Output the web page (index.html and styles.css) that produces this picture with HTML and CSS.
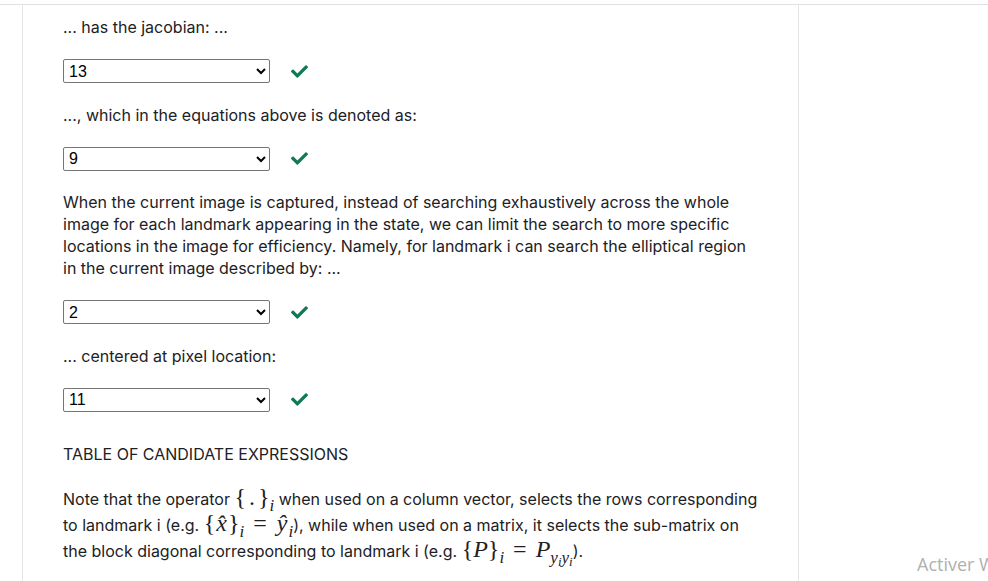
FILE: index.html
```html
<!DOCTYPE html>
<html>
<head>
<meta charset="utf-8">
<link rel="stylesheet" href="styles.css">
</head>
<body>
<div class="top"></div>
<div class="layout">
  <div class="gutter"></div>
  <main class="main">
    <p class="line">... has the jacobian: ...</p>
    <div class="answer">
      <select class="sel"><option>13</option></select>
      <svg class="check" viewBox="0 0 512 512"><path d="M173.898 439.404l-166.4-166.4c-9.997-9.997-9.997-26.206 0-36.204l36.203-36.204c9.997-9.998 26.207-9.998 36.204 0L192 312.69 432.095 72.596c9.997-9.997 26.207-9.997 36.204 0l36.203 36.204c9.997 9.997 9.997 26.206 0 36.204l-294.4 294.401c-9.998 9.997-26.207 9.997-36.204-.001z"/></svg>
    </div>
    <p class="line">..., which in the equations above is denoted as:</p>
    <div class="answer">
      <select class="sel"><option>9</option></select>
      <svg class="check" viewBox="0 0 512 512"><path d="M173.898 439.404l-166.4-166.4c-9.997-9.997-9.997-26.206 0-36.204l36.203-36.204c9.997-9.998 26.207-9.998 36.204 0L192 312.69 432.095 72.596c9.997-9.997 26.207-9.997 36.204 0l36.203 36.204c9.997 9.997 9.997 26.206 0 36.204l-294.4 294.401c-9.998 9.997-26.207 9.997-36.204-.001z"/></svg>
    </div>
    <p class="line">When the current image is captured, instead of searching exhaustively across the whole image for each landmark appearing in the state, we can limit the search to more specific locations in the image for efficiency. Namely, for landmark i can search the elliptical region in the current image described by: ...</p>
    <div class="answer">
      <select class="sel"><option>2</option></select>
      <svg class="check" viewBox="0 0 512 512"><path d="M173.898 439.404l-166.4-166.4c-9.997-9.997-9.997-26.206 0-36.204l36.203-36.204c9.997-9.998 26.207-9.998 36.204 0L192 312.69 432.095 72.596c9.997-9.997 26.207-9.997 36.204 0l36.203 36.204c9.997 9.997 9.997 26.206 0 36.204l-294.4 294.401c-9.998 9.997-26.207 9.997-36.204-.001z"/></svg>
    </div>
    <p class="line">... centered at pixel location:</p>
    <div class="answer">
      <select class="sel"><option>11</option></select>
      <svg class="check" viewBox="0 0 512 512"><path d="M173.898 439.404l-166.4-166.4c-9.997-9.997-9.997-26.206 0-36.204l36.203-36.204c9.997-9.998 26.207-9.998 36.204 0L192 312.69 432.095 72.596c9.997-9.997 26.207-9.997 36.204 0l36.203 36.204c9.997 9.997 9.997 26.206 0 36.204l-294.4 294.401c-9.998 9.997-26.207 9.997-36.204-.001z"/></svg>
    </div>
    <p class="line heading">TABLE OF CANDIDATE EXPRESSIONS</p>
    <p class="line note">Note that the operator <span class="m"><span class="br">{</span><span class="dot">.</span><span class="br">}</span><sub>i</sub></span> when used on a column vector, selects the rows corresponding to landmark i (e.g. <span class="m"><span class="br">{</span><span class="hat">x&#770;</span><span class="br">}</span><sub>i</sub><span class="eq">=</span><span class="hat">y&#770;</span><sub>i</sub></span>), while when used on a matrix, it selects the sub-matrix on the block diagonal corresponding to landmark i (e.g. <span class="m"><span class="br">{</span>P<span class="br">}</span><sub>i</sub><span class="eq">=</span>P<sub>y<sub>i</sub>y<sub>i</sub></sub></span>).</p>
  </main>
  <div class="side"></div>
</div>
<div class="watermark">Activer Windows</div>
</body>
</html>
```
FILE: styles.css
```css
html, body {
  margin: 0;
  padding: 0;
  background: #fff;
  overflow: hidden;
}
body {
  font-family: Inter, "Noto Sans", sans-serif;
  font-size: 16px;
  line-height: 22px;
  color: #1d2125;
  height: 581px;
  position: relative;
}
.top {
  height: 4px;
  border-bottom: 1px solid #dee2e6;
}
.layout {
  display: flex;
  height: 576px;
}
.gutter {
  width: 22px;
  border-right: 1px solid #e6e6e6;
}
.main {
  box-sizing: border-box;
  width: 776px;
  padding: 11px 35px 0 40px;
  border-right: 1px solid #e6e6e6;
}
.side {
  flex: 1;
}
.line {
  margin: 0 0 21px 0;
}
.answer {
  display: flex;
  align-items: center;
  gap: 21px;
  margin-bottom: 20.5px;
  height: 24px;
}
.sel {
  box-sizing: border-box;
  width: 207px;
  height: 24px;
  font-family: "Liberation Sans", Arial, sans-serif;
  font-size: 16px;
  color: #000;
  border: 1px solid #767676;
  border-radius: 2px;
  background: #fff;
  padding: 0 0 0 1px;
  margin: 0;
}
.check {
  width: 17px;
  height: 17px;
  fill: #0f7a55;
}
.heading {
  margin-top: 31px;
}
.note {
  line-height: 26px;
  margin-top: 0;
}
.m {
  font-family: "Liberation Serif", "DejaVu Serif", serif;
  font-size: 24px;
  line-height: 18px;
  font-style: italic;
}
.m .br {
  font-style: normal;
}
.m .dot {
  font-style: normal;
  margin: 0 3px;
}
.m .eq {
  font-style: normal;
  margin: 0 9px;
}
.m .hat {
  margin: 0 1px;
}
.m sub {
  font-size: 17px;
  line-height: 0;
  vertical-align: -6px;
}
.m sub sub {
  font-size: 13px;
  vertical-align: -3px;
}
.watermark {
  position: absolute;
  left: 917px;
  top: 553px;
  font-family: "Open Sans", "Noto Sans", sans-serif;
  font-size: 18px;
  color: #b0b0b0;
  white-space: nowrap;
}
```
